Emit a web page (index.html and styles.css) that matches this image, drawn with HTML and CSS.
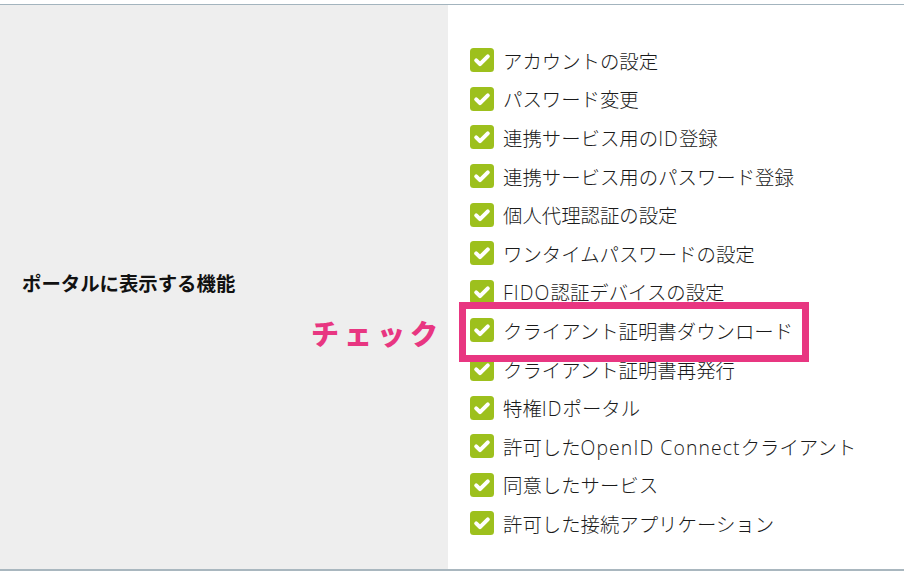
FILE: index.html
```html
<!DOCTYPE html>
<html lang="ja">
<head>
<meta charset="utf-8">
<link rel="stylesheet" href="styles.css">
</head>
<body>
<div class="table">
  <div class="label">ポータルに表示する機能</div>
  <div class="content">
    <ul class="list">
      <li><svg class="cb" viewBox="0 0 24 24"><rect width="24" height="24" rx="3.5"/><path d="M6.2 12.4l3.8 3.8 7.8-7.8"/></svg><span>アカウントの設定</span></li>
      <li><svg class="cb" viewBox="0 0 24 24"><rect width="24" height="24" rx="3.5"/><path d="M6.2 12.4l3.8 3.8 7.8-7.8"/></svg><span>パスワード変更</span></li>
      <li><svg class="cb" viewBox="0 0 24 24"><rect width="24" height="24" rx="3.5"/><path d="M6.2 12.4l3.8 3.8 7.8-7.8"/></svg><span>連携サービス用の<span class="lat">ID</span>登録</span></li>
      <li><svg class="cb" viewBox="0 0 24 24"><rect width="24" height="24" rx="3.5"/><path d="M6.2 12.4l3.8 3.8 7.8-7.8"/></svg><span>連携サービス用のパスワード登録</span></li>
      <li><svg class="cb" viewBox="0 0 24 24"><rect width="24" height="24" rx="3.5"/><path d="M6.2 12.4l3.8 3.8 7.8-7.8"/></svg><span>個人代理認証の設定</span></li>
      <li><svg class="cb" viewBox="0 0 24 24"><rect width="24" height="24" rx="3.5"/><path d="M6.2 12.4l3.8 3.8 7.8-7.8"/></svg><span>ワンタイムパスワードの設定</span></li>
      <li><svg class="cb" viewBox="0 0 24 24"><rect width="24" height="24" rx="3.5"/><path d="M6.2 12.4l3.8 3.8 7.8-7.8"/></svg><span><span class="lat">FIDO</span>認証デバイスの設定</span></li>
      <li class="hl"><span class="note">チェック</span><svg class="cb" viewBox="0 0 24 24"><rect width="24" height="24" rx="3.5"/><path d="M6.2 12.4l3.8 3.8 7.8-7.8"/></svg><span>クライアント証明書ダウンロード</span></li>
      <li><svg class="cb" viewBox="0 0 24 24"><rect width="24" height="24" rx="3.5"/><path d="M6.2 12.4l3.8 3.8 7.8-7.8"/></svg><span>クライアント証明書再発行</span></li>
      <li><svg class="cb" viewBox="0 0 24 24"><rect width="24" height="24" rx="3.5"/><path d="M6.2 12.4l3.8 3.8 7.8-7.8"/></svg><span>特権<span class="lat">ID</span>ポータル</span></li>
      <li><svg class="cb" viewBox="0 0 24 24"><rect width="24" height="24" rx="3.5"/><path d="M6.2 12.4l3.8 3.8 7.8-7.8"/></svg><span>許可した<span class="lat">OpenID Connect</span>クライアント</span></li>
      <li><svg class="cb" viewBox="0 0 24 24"><rect width="24" height="24" rx="3.5"/><path d="M6.2 12.4l3.8 3.8 7.8-7.8"/></svg><span>同意したサービス</span></li>
      <li><svg class="cb" viewBox="0 0 24 24"><rect width="24" height="24" rx="3.5"/><path d="M6.2 12.4l3.8 3.8 7.8-7.8"/></svg><span>許可した接続アプリケーション</span></li>
    </ul>
  </div>
</div>
</body>
</html>
```
FILE: styles.css
```css
html, body {
  margin: 0;
  padding: 0;
  background: #ffffff;
}
body {
  padding-top: 4px;
  font-family: "Noto Sans CJK JP", "Noto Sans", sans-serif;
  color: #222;
}
.table {
  display: flex;
  border-top: 1px solid #a3b4be;
  border-bottom: 2px solid #a9b7bf;
  height: 567px;
  box-sizing: border-box;
}
.label {
  width: 448px;
  flex: none;
  background: #eeeeee;
  box-sizing: border-box;
  padding-left: 22px;
  display: flex;
  align-items: center;
  font-weight: bold;
  font-size: 19.4px;
  color: #111;
  padding-bottom: 10px;
}
.content {
  flex: 1;
  padding: 36px 0 0 22px;
}
.list {
  list-style: none;
  margin: 0;
  padding: 0;
}
.list li {
  height: 38.6px;
  display: flex;
  align-items: center;
  gap: 9px;
  font-size: 19.4px;
  font-weight: 300;
  color: #1a1a1a;
}
.lat {
  font-family: "Open Sans", "Noto Sans", sans-serif;
  font-weight: 300;
  letter-spacing: 1.1px;
}
.cb {
  width: 24px;
  height: 24px;
  flex: none;
}
.cb rect {
  fill: #9dc01d;
}
.cb path {
  fill: none;
  stroke: #ffffff;
  stroke-width: 4;
  stroke-linecap: round;
  stroke-linejoin: round;
}
.hl {
  position: relative;
}
.hl::after {
  content: "";
  position: absolute;
  left: -11px;
  top: -9px;
  width: 350px;
  height: 60px;
  box-sizing: border-box;
  border: 7px solid #e83681;
  pointer-events: none;
}
.note {
  position: absolute;
  left: -159px;
  top: 50%;
  transform: translateY(-50%);
  font-size: 28px;
  font-weight: 900;
  letter-spacing: 5px;
  color: #e83681;
  white-space: nowrap;
  margin-top: 3px;
}
```
